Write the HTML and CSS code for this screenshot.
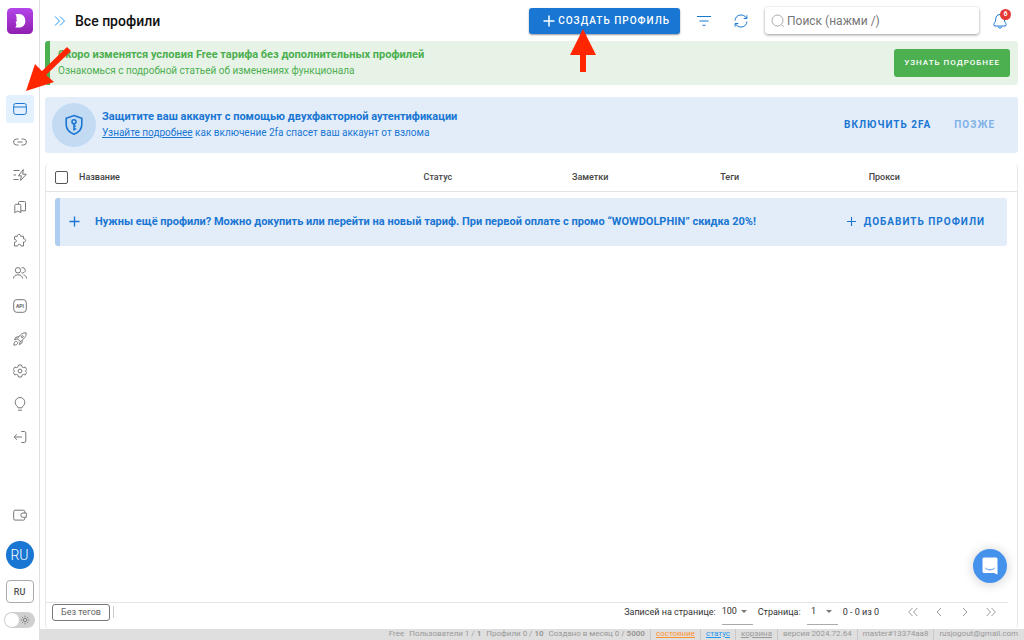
FILE: index.html
```html
<!DOCTYPE html>
<html lang="ru">
<head>
<meta charset="utf-8">
<title>Все профили</title>
<link rel="stylesheet" href="styles.css">
</head>
<body>
<aside class="sidebar">
  <a class="logo" href="#" aria-label="Dolphin">
    <svg viewBox="0 0 26 26" width="26" height="26"><defs><linearGradient id="lg" x1="0" y1="0" x2="0" y2="1"><stop offset="0" stop-color="#b445ea"/><stop offset="1" stop-color="#8f1fae"/></linearGradient></defs><rect width="26" height="26" rx="4.500" fill="url(#lg)"/><path d="M8.500 6H12c4 0 6.300 3 6.300 7S16 19.500 12 19.500H8.300c.9-1.200 1.100-2.300 1.100-3.500-.5-.3-.8-1.300-.5-2.400.8-.3 1.300-.6 1.200-1-.1-.3-.4-.5-.7-.6C9.900 10 9.500 8 8.500 6z" fill="#fff"/></svg>
  </a>
  <nav class="menu" aria-label="Разделы">
    <a class="item active" href="#" aria-label="Профили"><svg viewBox="0 0 14 14"><rect x=".7" y="1.500" width="12.600" height="11" rx="2"/><path d="M.7 5h12.600"/></svg></a>
    <a class="item" href="#" aria-label="Ссылки"><svg viewBox="0 0 14 14"><path d="M5.500 4H3.600a3 3 0 0 0 0 6h1.900M8.500 4h1.900a3 3 0 0 1 0 6H8.500M4.500 7h5"/></svg></a>
    <a class="item" href="#" aria-label="Автоматизация"><svg viewBox="0 0 14 14"><path d="M.5 2.500h6M.5 7H3M.5 11.500h5M10.300 1.500L5.500 7.800h2.800L7.600 12.500l5.700-6.300h-3.600z"/></svg></a>
    <a class="item" href="#" aria-label="Закладки"><svg viewBox="0 0 14 14"><path d="M2.700 4.300h4.100a1 1 0 0 1 1 1v7.400L4.800 11l-3 1.700V5.300a1 1 0 0 1 .9-1zM5.500 4.200V2.500a1 1 0 0 1 1-1h5a1 1 0 0 1 1 1v8.300H7.900"/></svg></a>
    <a class="item" href="#" aria-label="Расширения"><svg viewBox="0 0 14 14"><path d="M2 3.300h2.500c-.6-2.400 3.600-2.700 3.200 0h2.800v2.500c2.800-.5 2.900 3.500 0 3.200v4H8c0-2.500-3.400-2.400-3.400 0H1.500V9.300c2.400.2 2.500-3 0-2.900V3.800z"/></svg></a>
    <a class="item" href="#" aria-label="Команда"><svg viewBox="0 0 14 14"><circle cx="5" cy="4.300" r="2.700"/><path d="M.5 12.500c0-5 9-5 9 0M8.500 1.800a2.700 2.700 0 1 1 0 5M10.500 8.900c1.800.4 3 1.600 3 3.600"/></svg></a>
    <a class="item" href="#" aria-label="API"><svg viewBox="0 0 14 14"><rect x=".7" y=".7" width="12.600" height="12.600" rx="3"/><text class="api" x="7" y="8.800" text-anchor="middle">API</text></svg></a>
    <a class="item" href="#" aria-label="Запуск"><svg viewBox="0 0 14 14"><path d="M13.200.8C9.500.8 7 2.500 4.500 6.800l2.700 2.700c4-2.500 6-5 6-8.700zM5.800 4.700L3.300 5 1.500 7.500l3-.6M9.300 8.200L9 10.800l-2.500 1.900.7-3.200M3.500 9.300C1.500 9 1 11 .8 13.200 3 13 5 12.500 4.700 10.500z"/><circle cx="9.300" cy="4.700" r="1"/></svg></a>
    <a class="item" href="#" aria-label="Настройки"><svg viewBox="0 0 14 14"><path d="M5.500 1h3l.5 1.800 1.300.8 1.900-.5 1.500 2.500L12.400 7l1.300 1.400-1.500 2.500-1.900-.5-1.300.8L8.500 13h-3L5 11.200l-1.300-.8-1.900.5L.3 8.400 1.600 7 .3 5.600l1.500-2.500 1.900.5L5 2.800z"/><circle cx="7" cy="7" r="1.900"/></svg></a>
    <a class="item" href="#" aria-label="Идеи"><svg viewBox="0 0 14 14"><path d="M5 10.800C5 9.300 2.200 8.500 2.200 5.300a4.800 4.800 0 0 1 9.600 0C11.800 8.500 9 9.300 9 10.800zM5 13.200h4"/></svg></a>
    <a class="item" href="#" aria-label="Выход"><svg viewBox="0 0 14 14"><path d="M9 7H1.200M4 4.200L1.200 7 4 9.800M8.300 1.500h3a1.500 1.500 0 0 1 1.500 1.500v8a1.500 1.500 0 0 1-1.500 1.500h-3"/></svg></a>
  </nav>
  <a class="item wallet" href="#" aria-label="Кошелёк"><svg viewBox="0 0 14 14"><path d="M11.800 5V3.500a1.300 1.300 0 0 0-1.300-1.300H2A1.300 1.300 0 0 0 .7 3.500v7.300A1.300 1.300 0 0 0 2 12.100h8.500a1.300 1.300 0 0 0 1.300-1.300V9.300M10 5h3.300v4.300H10a2.100 2.100 0 0 1 0-4.300z"/></svg></a>
  <button class="avatar">RU</button>
  <button class="lang">RU</button>
  <label class="theme"><input type="checkbox" aria-label="Тёмная тема"><svg viewBox="0 0 12 12" width="10" height="10"><circle cx="6" cy="6" r="2"/><path d="M6 .8v2M6 9.200v2M.8 6h2M9.200 6h2M2.300 2.300l1.400 1.400M8.300 8.300l1.400 1.400M2.300 9.700l1.400-1.400M8.300 3.700l1.400-1.400"/></svg></label>
</aside>

<div class="page">
  <header class="topbar">
    <button class="icon-btn expand" aria-label="Развернуть меню"><svg viewBox="0 0 12 12" width="12" height="12"><path d="M1 1.500L5.500 6 1 10.500M6 1.500L10.500 6 6 10.500"/></svg></button>
    <h1>Все профили</h1>
    <button class="create"><svg viewBox="0 0 12 12" width="12" height="12"><path d="M6 .5v11M.5 6h11"/></svg>Создать профиль</button>
    <button class="icon-btn filter" aria-label="Фильтр"><svg viewBox="0 0 14 12" width="14" height="12"><path d="M0 1.500h14M2.500 6h9M5.500 10.300h3"/></svg></button>
    <button class="icon-btn refresh" aria-label="Обновить"><svg viewBox="0 0 14 14" width="14" height="14"><path d="M1 6.500C1.500 0 10 -.8 12.500 4.200M13 7.500C12.500 14 4 14.800 1.500 9.800M12.900 1.300v3.200H9.700M1.100 12.700V9.500h3.200"/></svg></button>
    <label class="search"><svg viewBox="0 0 14 14" width="14" height="14"><circle cx="6.500" cy="6.500" r="5.500"/><path d="M10.500 10.500l2.300 2.300"/></svg><input type="text" placeholder="Поиск (нажми /)" aria-label="Поиск"></label>
    <button class="icon-btn bell" aria-label="Уведомления"><svg viewBox="0 0 14 16" width="14" height="16"><path d="M7 1.500c-3 0-4.300 2.300-4.300 4.800 0 3-1.900 3.800-1.900 5.500 0 .8.500 1.200 1.200 1.200h10c.7 0 1.200-.4 1.200-1.200 0-1.700-1.900-2.500-1.900-5.500C11.300 3.800 10 1.500 7 1.500zM5 14c1 1.400 3 1.400 4 0"/></svg><span class="badge">6</span></button>
  </header>

  <section class="notice">
    <div class="copy"><strong>Скоро изменятся условия Free тарифа без дополнительных профилей</strong><span>Ознакомься с подробной статьей об изменениях функционала</span></div>
    <button class="learn">Узнать подробнее</button>
  </section>

  <section class="security">
    <div class="shield"><svg viewBox="0 0 20 22" width="20" height="22"><path d="M10 1.500l7.800 2.800v6.200c0 4.500-3.300 8-7.800 9.700-4.500-1.700-7.800-5.200-7.800-9.700V4.300z"/><circle cx="10" cy="7.800" r="2"/><path d="M10 10v6.500M10 12.300h1.800M10 15h2.200"/></svg></div>
    <div class="copy"><strong>Защитите ваш аккаунт с помощью двухфакторной аутентификации</strong><span><a href="#">Узнайте подробнее</a> как включение 2fa спасет ваш аккаунт от взлома</span></div>
    <button class="text-btn">Включить 2FA</button>
    <button class="text-btn later">Позже</button>
  </section>

  <main class="panel">
    <table>
      <thead><tr><th class="c-check"><input type="checkbox" aria-label="Выбрать все"></th><th>Название</th><th class="c-col">Статус</th><th class="c-col">Заметки</th><th class="c-col">Теги</th><th class="c-col">Прокси</th></tr></thead>
      <tbody><tr><td colspan="6">
        <div class="promo">
          <svg viewBox="0 0 12 12" width="11" height="11"><path d="M6 .5v11M.5 6h11"/></svg>
          <strong>Нужны ещё профили? Можно докупить или перейти на новый тариф. При первой оплате с промо “WOWDOLPHIN” скидка 20%!</strong>
          <button class="text-btn add"><svg viewBox="0 0 12 12" width="9" height="9"><path d="M6 0v12M0 6h12"/></svg>Добавить профили</button>
        </div>
      </td></tr></tbody>
    </table>
    <div class="pager">
      <button class="tag">Без тегов</button><i class="sep"></i>
      <label for="size">Записей на странице:</label>
      <span class="pick"><select id="size"><option>100</option></select></span>
      <label for="pg">Страница:</label>
      <span class="pick"><select id="pg"><option>&nbsp;&nbsp;1</option></select></span>
      <span class="range">0 - 0 из 0</span>
      <div class="arrows">
        <button aria-label="Первая"><svg viewBox="0 0 10 10"><path d="M4.500 1L.7 5l3.800 4M9.300 1L5.500 5l3.800 4"/></svg></button>
        <button aria-label="Назад"><svg viewBox="0 0 10 10"><path d="M7 1L3 5l4 4"/></svg></button>
        <button aria-label="Вперёд"><svg viewBox="0 0 10 10"><path d="M3 1l4 4-4 4"/></svg></button>
        <button aria-label="Последняя"><svg viewBox="0 0 10 10"><path d="M.7 1l3.800 4L.7 9M5.500 1l3.800 4-3.800 4"/></svg></button>
      </div>
    </div>
  </main>

  <footer class="status">
    <span>Free</span><span>Пользователи 1 / <b>1</b></span><span>Профили 0 / <b>10</b></span><span>Создано в месяц 0 / <b>5000</b></span>
    <span class="cell"><a class="orange" href="#">состояние</a></span><span class="cell"><a class="blue" href="#">статус</a></span><span class="cell"><a href="#">корзина</a></span><span class="cell">версия 2024.72.64</span><span class="cell">master#13374aa8</span><span class="cell">rusjogout@gmail.com</span>
  </footer>
</div>

<button class="chat" aria-label="Чат"><svg viewBox="0 0 16 18" width="16" height="18"><path d="M2 .5h12A1.500 1.500 0 0 1 15.500 2v15.500L11.800 16H2A1.500 1.500 0 0 1 .5 14.500V2A1.500 1.500 0 0 1 2 .5z" fill="#fff"/><path d="M3.500 11.200c2.600 2.200 6.400 2.200 9 0" fill="none" stroke="#4592ec" stroke-linecap="round"/></svg></button>
<svg class="pointer pointer-menu" viewBox="0 0 46 46" width="46" height="46" aria-hidden="true"><path d="M1 45L10 18l7 7L42 1l4 4-25 24 8 7z"/></svg>
<svg class="pointer pointer-create" viewBox="0 0 26 43" width="26" height="43" aria-hidden="true"><path d="M13 0l13 26H16v17h-6V26H0z"/></svg>
</body>
</html>
```
FILE: styles.css
```css
* { box-sizing: border-box; }
body { margin: 0; min-height: 100vh; display: flex; position: relative; background: #fff; color: #333; font: 9px/12px Roboto, "Open Sans", sans-serif; }
button, input, select { font: inherit; color: inherit; margin: 0; }
button { border: 0; padding: 0; background: none; cursor: pointer; }
svg { fill: none; stroke: currentColor; display: block; flex: none; }
strong, b { font-weight: 700; }

.sidebar { width: 40px; flex: none; border-right: 1px solid #e0e0e0; display: flex; flex-direction: column; align-items: center; padding: 8px 0 12px; }
.logo svg { stroke: none; }
.menu { flex: 1; display: flex; flex-direction: column; justify-content: space-between; padding: 61px 0 50px; }
.item { width: 28px; height: 28px; border-radius: 3px; display: grid; place-items: center; color: #777; }
.item svg { width: 14px; height: 14px; stroke-linejoin: round; }
.active { background: #e3f0fd; color: #1976d2; }
.api { font-size: 5px; font-weight: 700; fill: #666; stroke: none; }
.avatar { width: 28px; height: 28px; margin-top: 12px; border-radius: 50%; background: #1976d2; color: #fff; font-size: 14px; font-weight: 300; }
.lang { width: 28px; height: 23px; margin-top: 11px; border: 1px solid #aaa; border-radius: 4px; font-weight: 500; color: #555; }
.theme { display: flex; align-items: center; margin-top: 9px; width: 31px; height: 16px; padding: 1px 5px 1px 1px; border-radius: 8px; background: #d0d0d0; justify-content: space-between; color: #777; }
.theme input { appearance: none; width: 14px; height: 14px; border-radius: 50%; background: #fff; }

.page { flex: 1; min-width: 0; display: flex; flex-direction: column; }
.topbar { display: flex; align-items: center; height: 41px; padding: 0 17px 0 14px; }
.icon-btn { color: #1976d2; display: grid; place-items: center; }
.expand { color: #2196f3; }
h1 { margin: 0 auto 0 9px; font-size: 14px; line-height: 18px; font-weight: 500; color: #111; }
.create { display: flex; align-items: center; gap: 3px; height: 26px; padding: 0 10px 0 14px; border-radius: 3px; background: #1976d2; color: #fff; font-size: 10px; font-weight: 500; letter-spacing: 1px; text-transform: uppercase; box-shadow: 0 1px 2px #0006; }
.create svg { stroke-width: 1.5; }
.filter { margin-left: 17px; }
.refresh { margin-left: 23px; }
.search { display: flex; align-items: center; gap: 2px; width: 214px; height: 27px; margin-left: 17px; padding: 0 6px; border-radius: 3px; box-shadow: 0 1px 3px #0006; color: #aaa; }
.search input { border: 0; outline: 0; padding: 0; min-width: 0; flex: 1; font-size: 12px; background: none; color: #333; }
.search input::placeholder { color: #777; opacity: 1; }
.bell { position: relative; margin-left: 14px; }
.badge { position: absolute; top: -4px; right: -4px; width: 11px; height: 11px; border-radius: 50%; background: #e53935; color: #fff; font-size: 7px; line-height: 11px; font-weight: 700; text-align: center; }

.notice, .security { display: flex; align-items: center; margin: 0 6px 12px 5px; }
.notice { padding: 7px 8px; border-left: 5px solid #4caf50; border-radius: 3px; background: #e8f3e8; color: #4caf50; }
.copy { display: flex; flex-direction: column; gap: 2px; margin-right: auto; font-size: 10px; line-height: 14px; }
.copy strong { font-size: 11px; }
.learn { height: 28px; padding: 0 10px; border-radius: 3px; background: #4caf50; color: #fff; font-size: 8px; font-weight: 500; letter-spacing: 1px; text-transform: uppercase; }
.security { margin-bottom: 11px; padding: 6px 23px 6px 7px; border-radius: 3px; background: #e3edfa; color: #1976d2; }
.shield { width: 44px; height: 44px; margin-right: 6px; border-radius: 50%; background: #c3daf3; display: grid; place-items: center; }
.shield svg { stroke-width: 1.6; }
.security a { color: inherit; }
.text-btn { color: #1976d2; font-size: 10px; font-weight: 700; letter-spacing: 1px; text-transform: uppercase; }
.later { margin-left: 23px; opacity: .5; }

.panel { flex: 1; display: flex; flex-direction: column; margin: 0 6px 0 5px; border: solid #e8e8e8; border-width: 0 1px; border-radius: 4px; }
table { width: 100%; table-layout: fixed; border-collapse: collapse; }
th { height: 27px; padding: 0; text-align: left; font-size: 9px; font-weight: 500; color: #444; border-bottom: 1px solid #e4e4e4; }
td { padding: 6px 10px 0 9px; }
.c-check { width: 33px; }
.c-col { width: 15.28%; }
th input { appearance: none; display: block; width: 13px; height: 13px; margin-left: 9px; border: 1px solid #555; border-radius: 2px; }
.promo { display: flex; align-items: center; height: 48px; padding: 0 22px 0 9px; border-left: 5px solid #afcdf0; border-radius: 3px; background: #e3edfa; color: #1976d2; }
.promo svg { stroke-width: 1.5; }
.promo strong { margin: 0 auto 0 15px; font-size: 11px; }
.add { display: flex; align-items: center; gap: 8px; }
.pager { display: flex; align-items: center; height: 27px; margin: auto 9px 0 0; padding: 0 12px 8px 6px; border-top: 1px solid #e4e4e4; }
.tag { height: 17px; padding: 0 8px; border: 1px solid #777; border-radius: 3px; color: #666; }
.sep { width: 1px; height: 12px; margin: 0 auto 0 3px; background: #ccc; }
.pick { position: relative; width: 31px; height: 22px; margin: 3px 5px 0 6px; border-bottom: 1px solid #aaa; }
.pick select { appearance: none; border: 0; background: none; width: 100%; height: 16px; padding: 0; outline: 0; }
.pick::after { content: ""; position: absolute; right: 6px; top: 7px; border: solid transparent; border-width: 3px 3px 0; border-top-color: #777; pointer-events: none; }
.arrows { display: flex; gap: 16px; margin-left: 29px; color: #999; }
.arrows svg { width: 10px; height: 10px; }

.status { display: flex; justify-content: flex-end; gap: 5px; height: 11px; padding-right: 6px; background: #dfdfdf; color: #999; font-size: 8px; line-height: 10px; white-space: nowrap; }
.cell { padding-left: 5px; border-left: 1px solid #c8c8c8; }
.status a { color: inherit; }
.status .orange { color: #ff9130; }
.status .blue { color: #2196f3; }

.chat { position: fixed; right: 17px; bottom: 57px; width: 34px; height: 34px; border-radius: 50%; background: #4592ec; display: grid; place-items: center; box-shadow: 0 1px 12px #0003; }
.chat svg { stroke: none; }
.pointer { position: absolute; fill: #ff2600; stroke: none; pointer-events: none; }
.pointer-menu { left: 25px; top: 46px; }
.pointer-create { left: 570px; top: 29px; }
```
